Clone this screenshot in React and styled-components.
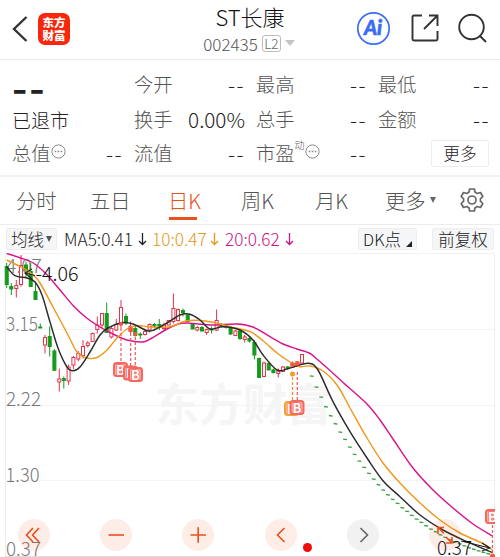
import React from 'react';
import styled, { createGlobalStyle } from 'styled-components';

const RED = '#e0354b';
const GREEN = '#159a1c';
const ORANGE = '#e8501c';

const GlobalStyle = createGlobalStyle`
  * {
    box-sizing: border-box;
  }
  body {
    margin: 0;
    background: #fff;
    font-family: 'Noto Sans CJK SC', sans-serif;
    font-weight: 300;
    color: #222;
    overflow: hidden;
  }
`;

const Page = styled.div`
  width: 500px;
  height: 557px;
  display: flex;
  flex-direction: column;
  background: #fff;
  overflow: hidden;
  white-space: nowrap;
`;

const Header = styled.header`
  height: 60px;
  flex: none;
  display: grid;
  grid-template-columns: 150px 1fr 150px;
  border-bottom: 1px solid #ececec;
`;

const HeaderLeft = styled.div`
  display: flex;
  align-items: center;
  gap: 10px;
  padding: 0 0 2px 10px;
`;

const Logo = styled.div`
  width: 32px;
  height: 32px;
  border-radius: 7px;
  background: #f8270c;
  color: #fff;
  font-size: 11.5px;
  line-height: 13px;
  font-weight: 900;
  display: flex;
  flex-direction: column;
  align-items: center;
  justify-content: center;
`;

const HeaderTitle = styled.div`
  display: flex;
  flex-direction: column;
  align-items: center;
  padding-top: 4px;
`;

const StockName = styled.div`
  font-size: 22px;
  line-height: 25px;
  color: #111;
`;

const StockCode = styled.div`
  display: flex;
  align-items: center;
  height: 28px;
  font-size: 17px;
  gap: 4px;
  padding-right: 2px;
  color: #555;
`;

const Level = styled.span`
  width: 19px;
  height: 17px;
  border: 1px solid #bbb;
  border-radius: 3px;
  font-size: 13.5px;
  line-height: 15px;
  text-align: center;
  color: #666;
`;

const HeaderRight = styled.div`
  display: flex;
  align-items: center;
  gap: 19.5px;
  padding: 0 0 3px 6px;
`;

const Triangle = styled.span`
  width: 0;
  height: 0;
  border: ${p => p.$w / 2}px solid transparent;
  border-bottom: 0;
  border-top: ${p => p.$h}px solid ${p => p.$color};
`;

const Stats = styled.section`
  height: 117px;
  flex: none;
  display: grid;
  grid-template-columns: 110px 110px 110px 111px;
  column-gap: 12px;
  grid-template-rows: repeat(3, 34.5px);
  padding: 7px 0 0 12px;
  border-bottom: 2px solid #f1f1f1;
`;

const Stat = styled.div`
  display: flex;
  align-items: center;
  font-size: 19.3px;
  line-height: 28px;
  color: #555;
`;

const StatValue = styled.span`
  margin-left: auto;
  margin-right: -1px;
  color: #222;
  font-size: ${p => (p.$dash ? 21 : 20.7)}px;
  letter-spacing: ${p => (p.$dash ? 1.5 : 0)}px;
`;

const Quote = styled.div`
  grid-row: span 2;
  display: flex;
  flex-direction: column;
`;

const Price = styled.div`
  height: 41px;
  font-size: 43px;
  line-height: 37px;
  font-weight: 500;
  letter-spacing: 2px;
`;

const Status = styled.div`
  font-size: 19px;
  line-height: 32px;
`;

const Sup = styled.sup`
  align-self: flex-start;
  font-size: 10px;
  line-height: 18px;
`;

const MoreButton = styled.button`
  width: 58px;
  height: 27px;
  margin-left: auto;
  padding: 0;
  font: inherit;
  font-size: 16.7px;
  line-height: 24px;
  color: #222;
  background: #fff;
  border: 1px solid #eee;
  border-radius: 2px;
`;

const Tabs = styled.nav`
  height: 48px;
  flex: none;
  display: flex;
  align-items: center;
  padding: 0 0 2px 16px;
  border-bottom: 1px solid #ececec;
`;

const Tab = styled.div`
  height: 45px;
  width: ${p => p.$w}px;
  display: flex;
  align-items: center;
  gap: 4px;
  font-size: 20.3px;
  color: ${p => (p.$active ? ORANGE : '#555')};

  span {
    position: relative;
  }
  span::after {
    content: '';
    display: ${p => (p.$active ? 'block' : 'none')};
    position: absolute;
    left: 1px;
    bottom: -5px;
    width: 28px;
    height: 3px;
    background: ${ORANGE};
  }
`;

const Toolbar = styled.div`
  height: 28px;
  flex: none;
  display: flex;
  align-items: center;
  padding: 0 6px 1px 6px;
`;

const Chip = styled.div`
  width: ${p => p.$w}px;
  height: 22px;
  margin-left: ${p => p.$ml || 0}px;
  display: flex;
  align-items: center;
  justify-content: center;
  gap: ${p => p.$gap || 0}px;
  font-size: 16.5px;
  line-height: 22px;
  background: #f5f6f7;
  border: 1px solid #eee;
  border-radius: 2px;
  color: #222;
`;

const Corner = styled.span`
  align-self: flex-end;
  margin-bottom: 2px;
  border-left: 6px solid transparent;
  border-bottom: 6px solid #222;
`;

const Average = styled.div`
  width: ${p => p.$w}px;
  display: flex;
  align-items: center;
  justify-content: space-between;
  margin-left: ${p => p.$ml}px;
  font-size: 17.2px;
  color: ${p => p.$color};
`;

const ChartPanel = styled.section`
  position: relative;
  height: 304px;
  flex: none;

  > svg {
    display: block;
  }
`;

const Controls = styled.div`
  position: absolute;
  left: 18px;
  top: 266px;
  display: flex;
  gap: 50.2px;
`;

const RoundButton = styled.button`
  width: 32px;
  height: 32px;
  padding: 0;
  border: 0;
  border-radius: 50%;
  background: ${p => (p.$muted ? 'rgba(120,120,120,.1)' : 'rgba(240,90,30,.11)')};
  color: ${p => (p.$muted ? '#666' : ORANGE)};

  svg {
    display: block;
  }
`;

const Dot = styled.i`
  position: absolute;
  left: 303px;
  top: 290px;
  width: 9px;
  height: 9px;
  border-radius: 50%;
  background: #ee0c0c;
`;

// [x, high, bodyTop, bodyBottom, low, up]
const candles = [
  [6.7, 263, 266.5, 284.5, 288, 0], [11.3, 283, 286.5, 289, 295, 0],
  [16.3, 280, 285.5, 288.5, 297.5, 1], [21, 255, 265.5, 284.5, 286.5, 1],
  [26, 261.5, 265, 270, 278, 0], [30.7, 263, 271.5, 286.5, 286.5, 0],
  [35.5, 281.5, 291.5, 299.5, 299.5, 0], [40.3, 323.5, 327, 328, 328, 0],
  [45, 335, 337.5, 345, 353.5, 1], [49.7, 326.5, 336.5, 346.5, 356.5, 0],
  [54.4, 349, 351, 370.3, 370.3, 0], [59.3, 368.5, 379, 382, 391.5, 1],
  [63.8, 376.5, 378.5, 380.5, 388.5, 0], [68.6, 364.5, 367, 381, 385, 1],
  [73.4, 356, 357.5, 365, 369, 1], [78.3, 351, 353.5, 359, 361.5, 1],
  [83, 340, 346.5, 355.5, 358.5, 1], [87.8, 341, 343, 345.5, 347.5, 1],
  [92.6, 332.5, 333.5, 341.5, 341.5, 1], [97.3, 316.5, 325, 329.5, 333.5, 1],
  [102, 313.5, 313.5, 325, 328.5, 1], [106.7, 302.5, 313.5, 332.5, 332.5, 0],
  [111.4, 326.5, 328.5, 337, 338.5, 1], [116.3, 319, 324.5, 330, 331, 1],
  [121, 300, 307.5, 324.5, 328, 1], [126, 313.5, 316.5, 323, 325, 0],
  [130.6, 321.5, 326.5, 331.5, 333.5, 1], [135.3, 325, 328.5, 335.5, 336.5, 0],
  [140.3, 332.5, 334, 335, 339, 0], [145, 330, 331.5, 334.5, 335.5, 1],
  [149.6, 323.5, 324.5, 330, 332.5, 1], [154.4, 323, 324.5, 326, 328.5, 0],
  [159.3, 319, 324.5, 326, 330, 0], [164, 322.5, 325, 328.5, 330, 1],
  [168.7, 320, 320.5, 325, 325, 1], [173.4, 293.5, 308.5, 321.5, 323.5, 1],
  [178, 308.5, 309.5, 320.5, 321.5, 1], [183, 308.5, 310.5, 312.5, 316.5, 0],
  [187.7, 314.5, 315, 321.5, 321.5, 0], [192.6, 323.5, 324.5, 329, 329, 0],
  [197.3, 326, 327.5, 330, 331.5, 1], [202, 326, 327.5, 331, 331, 0],
  [206.7, 328.5, 329.5, 332.5, 335, 1], [211.6, 326.5, 329, 330, 333.5, 0],
  [216.6, 309.5, 320.5, 330, 331, 1], [221.3, 323, 324.5, 326, 327, 0],
  [226, 324.5, 325.5, 327, 328.5, 0], [230.6, 326, 328, 334, 335, 0],
  [235.4, 330, 331, 335.5, 335.5, 1], [240, 329.5, 331, 338.5, 340, 0],
  [244.7, 335, 337, 339.5, 342.5, 1], [249.4, 336, 338.5, 341, 342.5, 0],
  [254.4, 340, 342.5, 355, 359.5, 0], [259.1, 357.5, 358.5, 377.5, 377.5, 0],
  [264, 361.5, 363, 376.5, 376.5, 1], [268.7, 361.5, 363.5, 370, 370, 0],
  [273.4, 368.5, 370, 372.5, 373.5, 0], [278.3, 368.5, 371, 373.5, 377.5, 1],
  [283, 366, 367, 371.5, 371.5, 1], [287.7, 366, 367, 368, 369.5, 0],
  [292.6, 361.5, 363.5, 367.5, 367.5, 1], [297.4, 361, 362, 366.5, 366.5, 1],
  [302, 354, 354.5, 363, 363, 1],
];

// closing dashes of the limit-down run
const dashes = [
  376, 387, 397, 406.7, 415.7, 423.7, 432, 439.3, 447, 454.3, 461, 467.3, 473.3,
  479, 484.7, 490, 494.7, 499.3, 503.3, 507.7, 511.3, 515.3, 519, 522.3, 525.7,
  529, 531.7, 534.7, 537.3, 539.7, 541.8, 543.8, 545.8, 547.6, 549.2, 550.8, 552.2, 553.6,
];

const ma5 = [
  [6.7, 266.7], [15, 275.7], [27, 278], [35, 282], [42, 295], [50, 322], [58, 348],
  [67, 367], [73, 370.7], [80, 367], [90, 352], [100, 335], [108, 328], [122, 322.7],
  [133, 324], [147, 330.7], [154, 330], [167, 323], [180, 315], [190, 314.3], [200, 320],
  [210, 329], [223, 326.7], [240, 330], [253, 340], [263, 355], [277, 370], [287, 369],
  [297, 365.7], [309, 363.3], [318, 370], [333, 401.7], [350, 431.7], [367, 458],
  [383, 480.7], [400, 496.7], [420, 515], [443, 530], [467, 541.7], [492.5, 552.7],
];

const ma10 = [
  [6.7, 260], [17, 265], [25, 269], [33, 275], [40, 283], [53, 307], [67, 333], [77, 352],
  [87, 358], [97, 357.5], [107, 350], [117, 338], [127, 329], [137, 325.5], [150, 327],
  [170, 326.7], [187, 320.7], [210, 321.7], [230, 326.7], [250, 331.7], [263, 340.7],
  [277, 353], [290, 362], [300, 366.7], [310, 366], [323, 371], [337, 385], [350, 408],
  [367, 438], [383, 463], [400, 483], [420, 503], [440, 520], [460, 533], [482, 543],
  [492.5, 550],
];

const ma20 = [
  [6.7, 253.5], [20, 257.7], [33.3, 263], [46.7, 274.5], [60, 290], [73.3, 305.7],
  [86.7, 318], [100, 327], [113, 334], [127, 340], [143, 342], [152, 338], [167, 329],
  [177, 324.5], [187, 323], [210, 325], [237, 324], [253, 327], [270, 336.7], [283, 344],
  [297, 349], [310, 353.5], [318, 360], [330, 370.5], [347, 386], [367, 404], [380, 420],
  [393, 439], [413, 468], [433, 490], [453, 508], [473, 524], [492.5, 536],
];

// smooth curve through the points (Catmull-Rom to bezier)
const curve = pts =>
  pts.reduce((d, p, i) => {
    if (i === 0) return `M${p[0]} ${p[1]}`;
    const a = pts[i - 2] || pts[i - 1];
    const b = pts[i - 1];
    const c = pts[i + 1] || p;
    return `${d}C${b[0] + (p[0] - a[0]) / 6} ${b[1] + (p[1] - a[1]) / 6} ${p[0] - (c[0] - b[0]) / 6} ${p[1] - (c[1] - b[1]) / 6} ${p[0]} ${p[1]}`;
  }, '');

const Candle = ({ data }) => {
  const [x, high, top, bottom, low, up] = data;
  const color = up ? RED : GREEN;
  return (
    <g stroke={color} strokeWidth="1">
      <path d={`M${x} ${high}V${top}M${x} ${bottom}V${low}`} />
      <rect x={x - 1.5} y={top} width="3" height={bottom - top} fill={up ? '#fff' : color} />
    </g>
  );
};

const Badge = ({ x, y, color = '#f5675f' }) => (
  <g>
    <rect x={x - 6.5} y={y - 6.5} width="13" height="13" rx="2.5" fill="#fbb0a9" stroke={color} strokeWidth="2" />
    <text x={x} y={y + 5} fontSize="13" fontWeight="700" fill="#fff" stroke={color} strokeWidth="1.6" paintOrder="stroke" textAnchor="middle">B</text>
  </g>
);

const Info = () => (
  <svg width="15" height="15" viewBox="0 0 15 15" fill="none" stroke="#888" style={{ marginBottom: 3 }}>
    <circle cx="7.5" cy="7.5" r="6.6" />
    <path d="M3.7 7.5h1.6M6.7 7.5h1.6M9.7 7.5h1.6" strokeWidth="1.4" />
  </svg>
);

const Gear = () => (
  <svg width="26" height="26" viewBox="0 0 26 26" fill="none" stroke="#666" strokeWidth="1.7" strokeLinejoin="round">
    <path d="M10.7 2h4.6l.8 3.2 2.2 1.3 3.2-1 2.3 4-2.4 2.3v2.4l2.4 2.3-2.3 4-3.2-1-2.2 1.3-.8 3.2h-4.6l-.8-3.2-2.2-1.3-3.2 1-2.3-4 2.4-2.3v-2.4L2.2 9.5l2.3-4 3.2 1 2.2-1.3z" />
    <circle cx="13" cy="13" r="4" />
  </svg>
);

const Chart = () => (
  <svg width="500" height="304" viewBox="0 253 500 304" fill="none">
    <text x="155" y="421" fontSize="44" fontWeight="700" fill="#f5f5f5" textLength="176">东方财富</text>
    <path d="M5 253.5H495M5 329.5H495M5 405.5H495M5 480.5H495" stroke="#f3f3f3" />
    <path d="M5.5 253V557M494.5 253V557" stroke="#eee" />
    <path d="M5 556.5H495" stroke="#ddd" />
    <g fontSize="19.5" fill="#777" lengthAdjust="spacingAndGlyphs">
      <text x="6" y="273" textLength="36" lengthAdjust="spacingAndGlyphs">4.07</text>
      <text x="6" y="330.5" textLength="32" lengthAdjust="spacingAndGlyphs">3.15</text>
      <text x="6" y="406" textLength="35" lengthAdjust="spacingAndGlyphs">2.22</text>
      <text x="5.5" y="482" textLength="34" lengthAdjust="spacingAndGlyphs">1.30</text>
      <text x="6" y="556" textLength="35" lengthAdjust="spacingAndGlyphs">0.37</text>
    </g>
    {candles.map(c => <Candle key={c[0]} data={c} />)}
    <g stroke="#36a03e" strokeWidth="1.3">
      {dashes.map((y, i) => (
        <path key={y} d={`M${309.8 + i * 4.77} ${y - 0.2}l3.8 .6`} />
      ))}
    </g>
    <g strokeWidth="1.45">
      <path d={curve(ma20)} stroke="#d9158b" />
      <path d={curve(ma10)} stroke="#f0981c" />
      <path d={curve(ma5)} stroke="#2b2b2b" />
    </g>
    <g stroke="#ee5a58" strokeWidth="1.2" strokeDasharray="3 2">
      <path d="M121 328V362M130.6 333V367M135.3 337V367M297.3 372V400M492.5 525V556" />
      <path d="M292.5 377V401" stroke="#f0952a" />
    </g>
    <g fill="#f5583e">
      <circle cx="121" cy="324" r="2" />
      <circle cx="130.6" cy="329.5" r="2.3" />
      <circle cx="135.3" cy="334" r="2" />
      <circle cx="297.3" cy="363.5" r="2.3" />
      <circle cx="292.5" cy="364.5" r="2.3" />
      <circle cx="492.5" cy="556" r="2.5" />
      <circle cx="292.5" cy="374" r="2.5" fill="#f29a2e" />
    </g>
    <Badge x={120.5} y={369.5} />
    <Badge x={130.5} y={373} />
    <Badge x={135.5} y={374.5} />
    <Badge x={291.5} y={408.5} color="#f5a234" />
    <Badge x={297} y={407.5} />
    <svg x="480" y="500" width="15" height="40" viewBox="480 500 15 40">
      <Badge x={492.5} y={516.5} />
    </svg>
    <g stroke="#222" strokeWidth="1.1">
      <path d="M32 269L25 273L32 279M25 273L35 275.5" />
      <path d="M461 541L490 548M482 543L490 548L482 551" />
    </g>
    <g fontSize="20" fill="#111">
      <text x="35.5" y="280.5" textLength="43" lengthAdjust="spacingAndGlyphs">-4.06</text>
      <text x="437" y="554.5" textLength="35" lengthAdjust="spacingAndGlyphs">0.37</text>
    </g>
  </svg>
);

const icons = [
  'M15 9l-6.5 7 6.5 7M21 9l-6.5 7 6.5 7',
  'M8.5 16h15.5',
  'M8.5 16h15.5M16.2 8.3v15.5',
  'M19.5 9l-7 7 7 7',
  'M13.5 9l7 7-7 7',
  'M9 15V8.5H15M9 8.5L15 14.5M23 18V24H17M23 24L17 18',
];

const stats = [
  ['今开', '--'], ['最高', '--'], ['最低', '--'],
  ['换手', '0.00%'], ['总手', '--'], ['金额', '--'],
];

export default function App() {
  return (
    <Page>
      <GlobalStyle />
      <Header>
        <HeaderLeft>
          <svg width="18" height="28" viewBox="0 0 18 28" fill="none" stroke="#333" strokeWidth="2.4">
            <path d="M16.5 2L4 14L16.5 26" />
          </svg>
          <Logo>
            <span>东方</span>
            <span>财富</span>
          </Logo>
        </HeaderLeft>
        <HeaderTitle>
          <StockName>ST长康</StockName>
          <StockCode>
            002435
            <Level>L2</Level>
            <Triangle $w={10} $h={6} $color="#c4c4c4" />
          </StockCode>
        </HeaderTitle>
        <HeaderRight>
          <svg width="35" height="35" viewBox="0 0 35 35">
            <circle cx="17.5" cy="17.5" r="15.7" fill="none" stroke="#3a6cf5" strokeWidth="1.7" />
            <text x="17" y="24" fontSize="20" fontWeight="900" fontStyle="italic" fontFamily="Lato, sans-serif" fill="#3a6cf5" stroke="#3a6cf5" strokeWidth=".6" textAnchor="middle">Ai</text>
          </svg>
          <svg width="28" height="28" viewBox="0 0 28 28" fill="none" stroke="#333" strokeWidth="1.9">
            <path d="M11 1.5H3Q1.5 1.5 1.5 3V25Q1.5 26.5 3 26.5H25Q26.5 26.5 26.5 25V17M18 1.5H26.5V12M26 2L13 15" />
          </svg>
          <svg width="30" height="30" viewBox="0 0 30 30" fill="none" stroke="#333" strokeWidth="1.9">
            <circle cx="13.5" cy="14" r="12.3" />
            <path d="M21.5 22.5L28 29" />
          </svg>
        </HeaderRight>
      </Header>

      <Stats>
        <Quote>
          <Price>--</Price>
          <Status>已退市</Status>
        </Quote>
        {stats.map(([label, value]) => (
          <Stat key={label}>
            {label}
            <StatValue $dash={value === '--'}>{value}</StatValue>
          </Stat>
        ))}
        <Stat>总值<Info /><StatValue $dash>--</StatValue></Stat>
        <Stat>流值<StatValue $dash>--</StatValue></Stat>
        <Stat>市盈<Sup>动</Sup><Info /><StatValue $dash>--</StatValue></Stat>
        <Stat><MoreButton>更多</MoreButton></Stat>
      </Stats>

      <Tabs>
        <Tab $w={74}><span>分时</span></Tab>
        <Tab $w={78}><span>五日</span></Tab>
        <Tab $w={73} $active><span>日K</span></Tab>
        <Tab $w={74}><span>周K</span></Tab>
        <Tab $w={70}><span>月K</span></Tab>
        <Tab $w={74}><span>更多</span><Triangle $w={7} $h={6} $color="#666" /></Tab>
        <Gear />
      </Tabs>

      <Toolbar>
        <Chip $w={51} $gap={2}>均线<Triangle $w={7} $h={6} $color="#555" /></Chip>
        <Average $w={83} $ml={7} $color="#222"><span>MA5:0.41</span><Arrow /></Average>
        <Average $w={67} $ml={5} $color="#e0981a"><span>10:0.47</span><Arrow /></Average>
        <Average $w={69} $ml={6} $color="#cc1585"><span>20:0.62</span><Arrow /></Average>
        <Chip $w={59} $ml={64} $gap={5}>DK点<Corner /></Chip>
        <Chip $w={62} $ml={15}>前复权</Chip>
      </Toolbar>

      <ChartPanel>
        <Chart />
        <Controls>
          {icons.map((d, i) => (
            <RoundButton key={d} $muted={i === 4}>
              <svg width="32" height="32" viewBox="0 0 32 32" fill="none" stroke="currentColor" strokeWidth="1.6">
                <path d={d} />
              </svg>
            </RoundButton>
          ))}
        </Controls>
        <Dot />
      </ChartPanel>
    </Page>
  );
}

function Arrow() {
  return (
    <svg width="9" height="14" viewBox="0 0 9 14" fill="none" stroke="currentColor" strokeWidth="1.3">
      <path d="M4.5 1V12.5M1 9L4.5 12.5L8 9" />
    </svg>
  );
}
